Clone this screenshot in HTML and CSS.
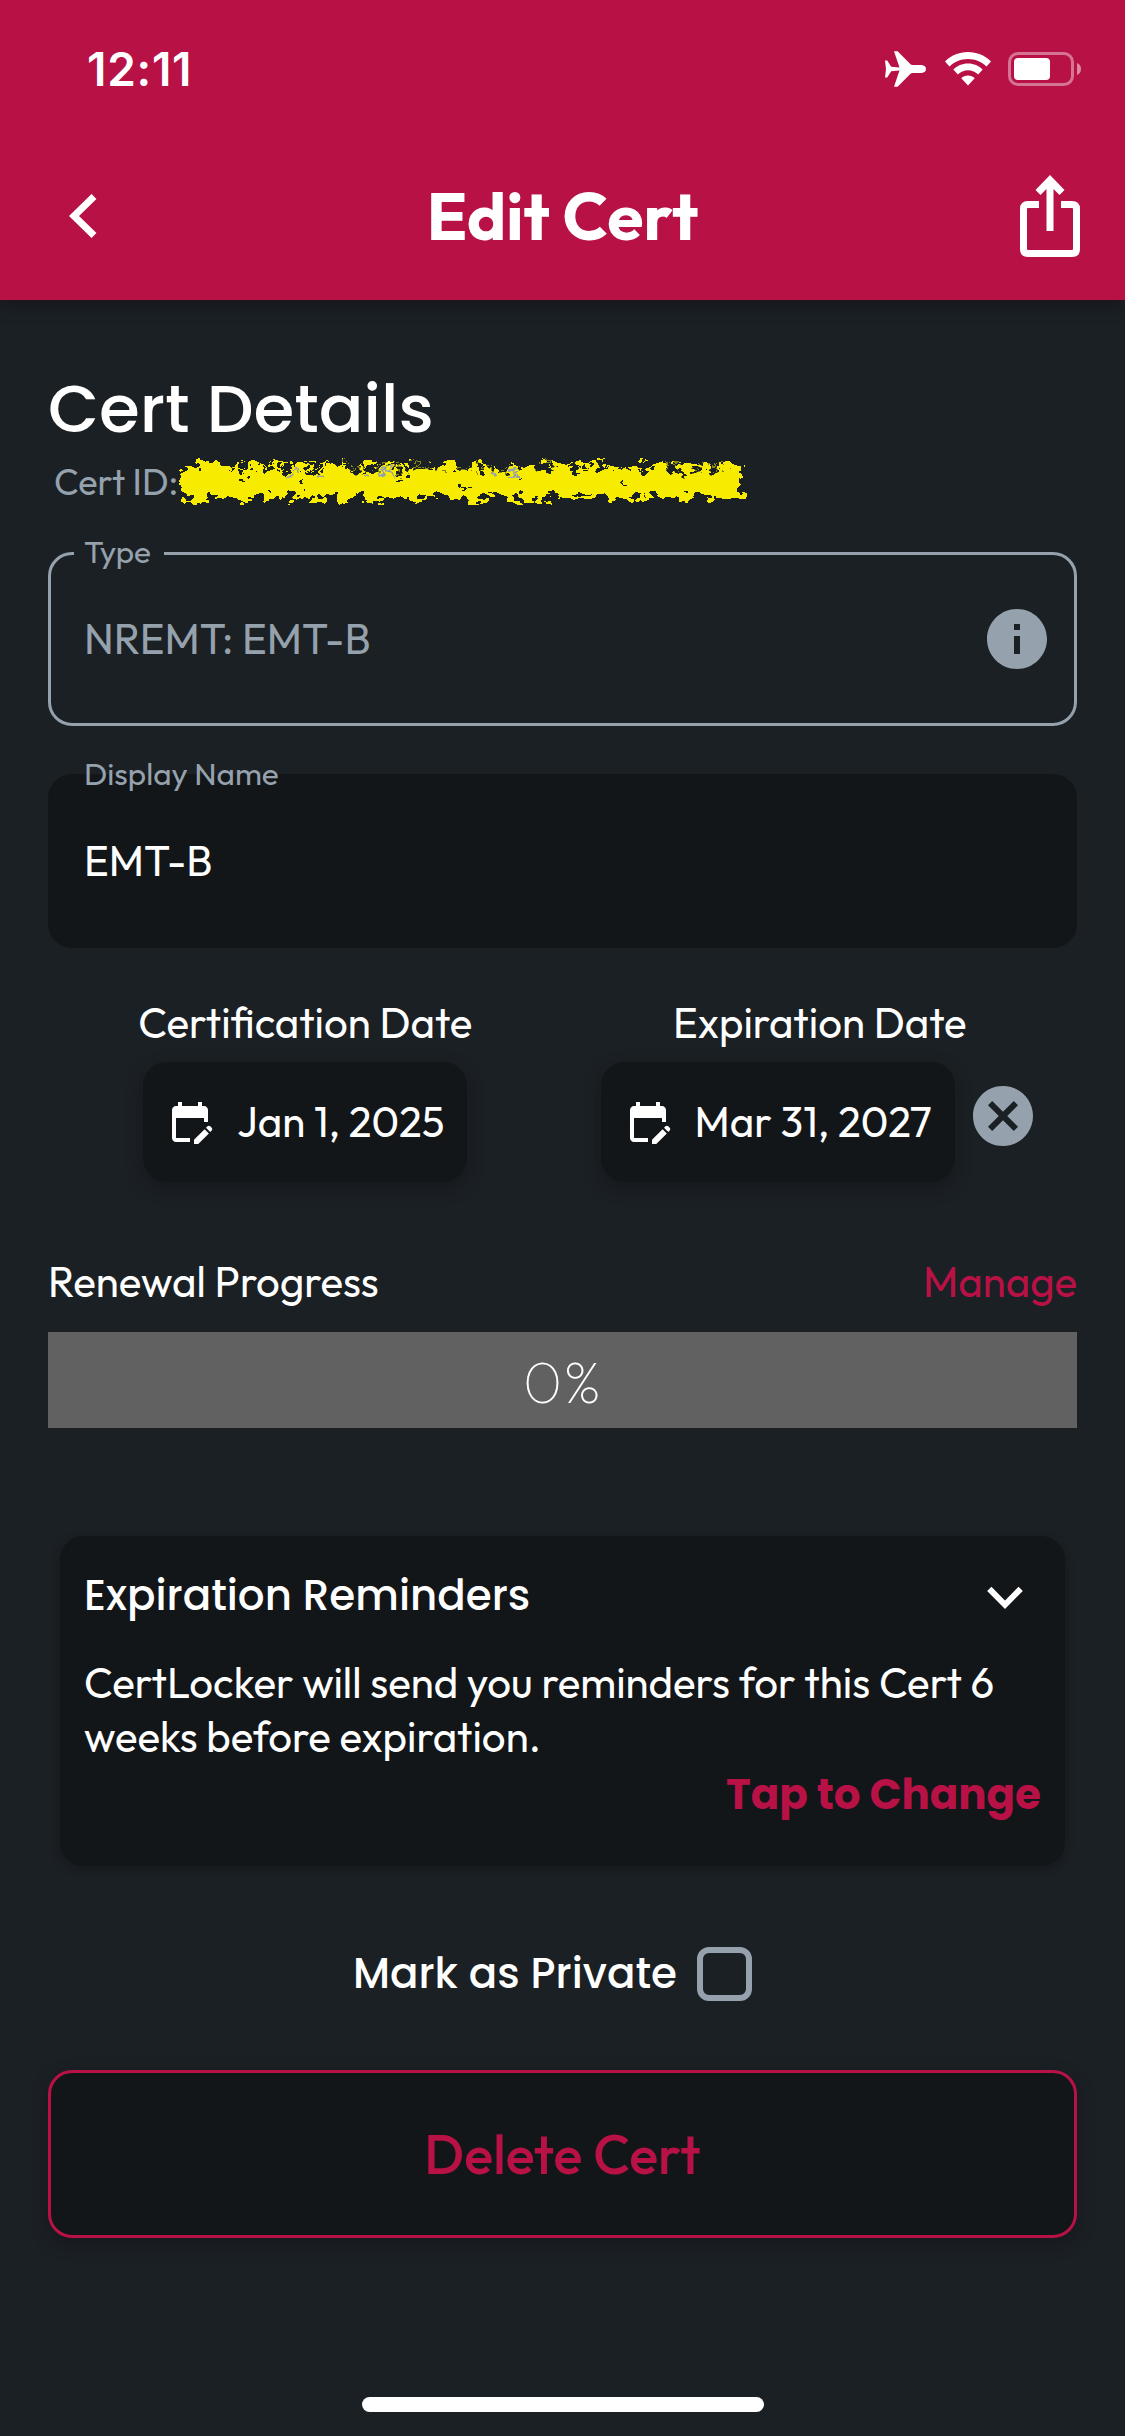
FILE: index.html
```html
<!DOCTYPE html>
<html lang="en">
<head>
<meta charset="utf-8">
<title>Edit Cert</title>
<link rel="stylesheet" href="styles.css">
</head>
<body>
<div class="screen">
  <header class="app-header">
    <div class="status-bar">
      <span class="clock">12:11</span>
      <div class="status-icons">
        <svg class="plane" viewBox="0 0 42 38"><path d="M1 10.500h2.200l4 6.300 8.300.6L10 1.200h3.600L26.500 14.200q.8.8 2 .8h9q4.500.5 4.500 4t-4.500 4h-9q-1.200 0-2 .8L13.600 36.800H10l5.500-16.200-8.300.6-4 6.300H1l1-8.500z"/></svg>
        <svg class="wifi" viewBox="0 0 46 34"><path d="M23 0C14 0 6 3.500 0 9.500l4.500 5C9.500 9.700 16 7 23 7s13.500 2.700 18.500 7.500l4.500-5C40 3.500 32 0 23 0zM23 11.500c-5.700 0-11 2.300-14.700 6l4.500 5C15.600 20 19 18.300 23 18.300s7.400 1.700 10.200 4.200l4.500-5c-3.700-3.700-9-6-14.700-6zM23 23.500c-2.600 0-5 1-6.700 2.800L23 33.500l6.700-7.200C28 24.500 25.600 23.500 23 23.500z"/></svg>
        <svg class="battery" viewBox="0 0 74 34"><rect x="1.500" y="1.500" width="63" height="31" rx="8.500" fill="none" stroke="#fff" stroke-opacity=".42" stroke-width="3"/><rect x="6" y="6" width="36" height="22" rx="4"/><path d="M69 11q4 1.500 4 6t-4 6z" fill-opacity=".5"/></svg>
      </div>
    </div>
    <nav class="nav-bar">
      <svg class="back" viewBox="0 0 28 44"><path d="M25 2.500 5 22l20 19.500" fill="none" stroke="#fff" stroke-width="7"/></svg>
      <h1 class="nav-title">Edit Cert</h1>
      <svg class="share" viewBox="0 0 60 82"><path d="M19 29.500H8q-4.500 0-4.500 4.500v40q0 4.500 4.500 4.500h44q4.500 0 4.500-4.500V34q0-4.500-4.500-4.500H41" fill="none" stroke="#fff" stroke-width="7"/><path d="M30 0 44.500 15 39.500 20 33.500 14V56h-7V14l-6 6-5-5z"/></svg>
    </nav>
  </header>

  <main class="content">
    <h2 class="page-title">Cert Details</h2>
    <div class="cert-id">
      <span>Cert ID:</span>
      <svg class="redaction" viewBox="0 0 566 46">
        <defs>
          <filter id="rough" x="-2%" y="-20%" width="104%" height="140%">
            <feTurbulence type="fractalNoise" baseFrequency=".07 .1" numOctaves="3" seed="7" result="n"/>
            <feDisplacementMap in="SourceGraphic" in2="n" scale="30" xChannelSelector="R" yChannelSelector="G"/>
          </filter>
        </defs>
        <g filter="url(#rough)">
          <path d="M4 6H562V39H4z"/>
          <path d="M58 9.500H150M168 9H262M280 9H372M392 9.500H470M486 9H550" fill="none" stroke="#1b2024" stroke-width="5" stroke-dasharray="9 5 4 8 12 6"/>
          <path d="M110 15h10M132 15h12M183 15h10M203 15h13M310 15h8M330 15h9" fill="none" stroke="#95a1ac" stroke-width="3"/>
          <path d="M64 22h6M118 24h6M222 20h5M284 28h5M340 20h4M402 31h10M444 24h4" fill="none" stroke="#1b2024" stroke-width="4"/>
        </g>
      </svg>
    </div>

    <div class="field field-outlined">
      <label class="field-label">Type</label>
      <span class="field-value">NREMT: EMT-B</span>
      <svg class="round-icon" viewBox="2 2 20 20"><path d="M12 2C6.480 2 2 6.480 2 12s4.480 10 10 10 10-4.480 10-10S17.520 2 12 2zm1 15h-2v-6h2v6zm0-8h-2V7h2v2z"/></svg>
    </div>

    <div class="field field-filled">
      <label class="field-label">Display Name</label>
      <span class="field-value">EMT-B</span>
    </div>

    <section class="dates">
      <div class="date-col">
        <span class="date-label">Certification Date</span>
        <div class="date-row">
          <button class="date-button">
            <svg class="calendar" viewBox="0 0 24 24"><path d="M12 22H5c-1.110 0-2-.9-2-2L3.010 6c0-1.100.88-2 1.990-2h1V2h2v2h8V2h2v2h1c1.100 0 2 .9 2 2v6h-2v-2H5v10h7v2zm10.130-5.010.71-.71c.39-.39.39-1.020 0-1.410l-.71-.71c-.39-.39-1.020-.39-1.410 0l-.71.71 2.120 2.120zm-.71.71-5.300 5.300H14v-2.120l5.300-5.300 2.120 2.120z"/></svg>
            <span>Jan 1, 2025</span>
          </button>
        </div>
      </div>
      <div class="date-col">
        <span class="date-label">Expiration Date</span>
        <div class="date-row">
          <button class="date-button">
            <svg class="calendar" viewBox="0 0 24 24"><path d="M12 22H5c-1.110 0-2-.9-2-2L3.010 6c0-1.100.88-2 1.990-2h1V2h2v2h8V2h2v2h1c1.100 0 2 .9 2 2v6h-2v-2H5v10h7v2zm10.130-5.010.71-.71c.39-.39.39-1.020 0-1.410l-.71-.71c-.39-.39-1.020-.39-1.410 0l-.71.71 2.120 2.120zm-.71.71-5.300 5.300H14v-2.120l5.300-5.300 2.120 2.120z"/></svg>
            <span>Mar 31, 2027</span>
          </button>
          <svg class="round-icon clear" viewBox="2 2 20 20"><path d="M12 2C6.470 2 2 6.470 2 12s4.470 10 10 10 10-4.470 10-10S17.530 2 12 2zm5 13.590L15.590 17 12 13.410 8.410 17 7 15.590 10.590 12 7 8.410 8.410 7 12 10.590 15.590 7 17 8.410 13.410 12 17 15.590z"/></svg>
        </div>
      </div>
    </section>

    <div class="progress-head">
      <span>Renewal Progress</span>
      <a class="manage">Manage</a>
    </div>
    <div class="progress-bar">0%</div>

    <section class="card">
      <div class="card-head">
        <h3 class="card-title">Expiration Reminders</h3>
        <svg class="chevron" viewBox="0 0 36 24"><path d="M2.300 2.800 18 18.800 33.700 2.800" fill="none" stroke="#fff" stroke-width="6"/></svg>
      </div>
      <p class="card-text">CertLocker will send you reminders for this Cert 6 weeks before expiration.</p>
      <a class="card-action">Tap to Change</a>
    </section>

    <div class="private-row">
      <span>Mark as Private</span>
      <span class="checkbox"></span>
    </div>

    <button class="delete-button">Delete Cert</button>
  </main>

  <div class="home-indicator"></div>
</div>
</body>
</html>
```

FILE: styles.css
```css
* {
  box-sizing: border-box;
}

body {
  margin: 0;
  background: #1b2024;
  color: #fff;
  font-family: Outfit, Lato, sans-serif;
  font-size: 42px;
  font-weight: 400;
  line-height: 54px;
}

h1, h2, h3, p {
  margin: 0;
}

button {
  border: 0;
  color: inherit;
  font: inherit;
}

svg {
  display: block;
  flex: none;
  fill: #fff;
}

.screen {
  display: flex;
  flex-direction: column;
  height: 2436px;
}

.app-header {
  height: 300px;
  background: #b81146;
  box-shadow: 0 6px 12px rgba(20, 16, 24, .5);
}

.status-bar {
  display: flex;
  align-items: center;
  justify-content: space-between;
  height: 132px;
  padding: 6px 43px 0 87px;
}

.clock {
  font: 600 46px/56px Inter, sans-serif;
  letter-spacing: .7px;
}

.status-icons {
  display: flex;
  align-items: center;
}

.plane {
  width: 42px;
  height: 38px;
  margin-right: 19px;
}

.wifi {
  width: 46px;
  height: 34px;
  margin-right: 17px;
}

.battery {
  width: 74px;
  height: 34px;
}

.nav-bar {
  display: grid;
  grid-template-columns: 1fr auto 1fr;
  align-items: center;
  height: 168px;
  padding: 0 45px;
}

.back {
  width: 28px;
  height: 44px;
  margin-left: 24px;
}

.nav-title {
  font-size: 66px;
  font-weight: 700;
  line-height: 84px;
}

.share {
  width: 60px;
  height: 82px;
  justify-self: end;
}

.content {
  padding: 69px 48px 0;
}

.page-title {
  font: 500 66px/80px Poppins, Inter, sans-serif;
}

.cert-id {
  display: flex;
  align-items: center;
  height: 44px;
  margin-top: 10px;
  padding: 1px 0 0 6px;
  color: #95a1ac;
  font-size: 36px;
}

.redaction {
  width: 566px;
  height: 46px;
  margin-left: 1px;
  fill: #f7ec00;
  overflow: visible;
}

.field {
  position: relative;
  display: flex;
  align-items: center;
  justify-content: space-between;
  height: 174px;
  border: 3px solid transparent;
  border-radius: 24px;
  padding: 0 27px 0 33px;
}

.field-outlined {
  margin-top: 49px;
  border-color: #95a1ac;
  color: #95a1ac;
}

.field-filled {
  margin-top: 48px;
  background: #121619;
  border-color: #121619;
}

.field-label {
  position: absolute;
  top: -24px;
  left: 23px;
  padding: 0 13px 0 10px;
  color: #95a1ac;
  font-size: 31.5px;
  line-height: 40px;
}

.field-outlined .field-label {
  background: #1b2024;
}

.round-icon {
  width: 60px;
  height: 60px;
  fill: #95a1ac;
}

.dates {
  display: grid;
  grid-template-columns: 1fr 1fr;
  margin-top: 49px;
}

.date-col {
  display: flex;
  flex-direction: column;
  align-items: center;
  gap: 13px;
}

.date-label {
  line-height: 52px;
}

.date-row {
  display: flex;
  align-items: center;
}

.date-button {
  display: flex;
  align-items: center;
  gap: 23px;
  height: 120px;
  padding: 0 23px;
  border-radius: 24px;
  background: #121619;
  box-shadow: 0 6px 15px rgba(20, 16, 24, .5);
}

.calendar {
  width: 48px;
  height: 48px;
}

.clear {
  margin: 0 6px 12px 18px;
}

.progress-head {
  display: flex;
  justify-content: space-between;
  margin-top: 73px;
}

.manage {
  color: #b81146;
}

.progress-bar {
  height: 96px;
  margin-top: 23px;
  padding-top: 1px;
  background: #616161;
  font-size: 60px;
  font-weight: 100;
  line-height: 96px;
  text-align: center;
}

.card {
  display: flex;
  flex-direction: column;
  height: 330px;
  margin: 108px 12px 0;
  padding: 30px 24px 0;
  border-radius: 24px;
  background: #121619;
  box-shadow: 0 3px 9px rgba(18, 15, 22, .5);
}

.card-head {
  display: flex;
  align-items: center;
  justify-content: space-between;
  padding-right: 18px;
}

.card-title,
.private-row {
  font: 500 42px/60px Poppins, Inter, sans-serif;
}

.chevron {
  width: 36px;
  height: 24px;
  margin-top: 3px;
}

.card-text {
  margin-top: 30px;
}

.card-action {
  align-self: flex-end;
  margin-top: 1px;
  color: #b81146;
  font: 700 42px/60px Poppins, Inter, sans-serif;
}

.private-row {
  display: flex;
  align-items: center;
  justify-content: center;
  gap: 20px;
  margin-top: 78px;
  padding-right: 20px;
}

.checkbox {
  width: 55px;
  height: 54px;
  border: 6px solid #95a1ac;
  border-radius: 12px;
}

.delete-button {
  display: block;
  width: 100%;
  height: 168px;
  margin-top: 66px;
  border: 3px solid #b81146;
  border-radius: 24px;
  background: #121619;
  box-shadow: 0 6px 15px rgba(20, 16, 24, .5);
  color: #b81146;
  font-size: 54px;
  font-weight: 500;
}

.home-indicator {
  width: 402px;
  height: 15px;
  margin: auto auto 24px;
  border-radius: 8px;
  background: #fff;
}
```
